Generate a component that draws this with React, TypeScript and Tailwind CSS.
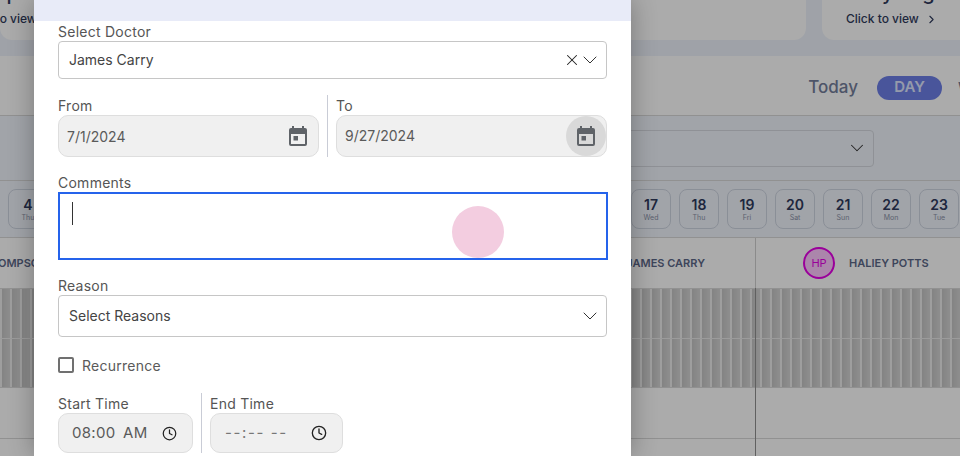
import { ChevronDown, ChevronRight, Clock, X } from "lucide-react";

const days = [
  { d: "17", w: "Wed" },
  { d: "18", w: "Thu" },
  { d: "19", w: "Fri" },
  { d: "20", w: "Sat" },
  { d: "21", w: "Sun" },
  { d: "22", w: "Mon" },
  { d: "23", w: "Tue" },
];

const DayChip = ({ d, w }: { d: string; w: string }) => (
  <div className="flex h-10 w-10 shrink-0 flex-col items-center justify-center rounded-lg border border-[#ced5e2]">
    <span className="text-[14px] leading-[17px] font-semibold text-[#2f3a5c]">{d}</span>
    <span className="text-[7px] leading-[9px] text-[#8a93a8]">{w}</span>
  </div>
);

const CalendarIcon = () => (
  <svg width="24" height="24" viewBox="0 0 24 24" fill="#5f6368">
    <path d="M19 4h-1V2h-2v2H8V2H6v2H5a2 2 0 0 0-2 2v14a2 2 0 0 0 2 2h14a2 2 0 0 0 2-2V6a2 2 0 0 0-2-2zm0 16H5V10h14v10z" />
    <rect x="7.5" y="12" width="4.5" height="4.5" />
  </svg>
);

const Background = () => (
  <div className="flex h-[456px] w-[960px] flex-col bg-white">
    <div className="flex h-[56px] shrink-0 justify-end gap-4 bg-[#edf2fb] pb-4">
      <div className="mr-auto flex w-[150px] flex-col justify-end overflow-hidden rounded-b-xl bg-white pb-[13px] text-[12px] leading-4 font-medium text-[#2f3a5c]">
        <span className="mb-[8px] -ml-[37px] whitespace-nowrap text-[20px] leading-[20px]">Setup</span>
        <span className="-ml-[36px] whitespace-nowrap">Click to view</span>
      </div>
      <div className="w-[300px] rounded-b-xl bg-white" />
      <div className="flex w-[138px] flex-col justify-end overflow-hidden rounded-bl-xl bg-white pb-[13px] pl-6 font-medium text-[#2f3a5c]">
        <span className="mb-[8px] whitespace-nowrap text-[20px] leading-[20px]">Daily Log</span>
        <span className="flex items-center gap-[6px] text-[12px] leading-4">
          Click to view <ChevronRight size={13} />
        </span>
      </div>
    </div>
    <div className="flex h-[60px] shrink-0 items-center justify-end overflow-hidden border-b border-[#d9d9d9] pt-1">
      <span className="mr-[19px] text-[17px] font-medium text-[#747e9c]">Today</span>
      <span className="mr-4 flex h-6 w-[65px] items-center justify-center rounded-full bg-[#6d7fe8] text-[15px] font-semibold text-[#dfe6ff]">DAY</span>
      <span className="w-[2px] overflow-hidden text-[16px] font-semibold text-[#747e9c]">W</span>
    </div>
    <div className="flex h-[65px] shrink-0 items-center justify-end border-b border-[#d9d9d9] bg-[#f1f5fc] pr-[86px]">
      <div className="flex h-[37px] w-[260px] items-center justify-end rounded border border-[#d5d9e0] pr-[5px] text-[#333]">
        <ChevronDown size={22} strokeWidth={1.1} />
      </div>
    </div>
    <div className="flex h-[57px] shrink-0 items-center justify-between border-b border-[#d9d9d9] bg-[#f1f5fc] pr-[1px] pl-2">
      <DayChip d="4" w="Thu" />
      <div className="flex gap-2">
        {days.map((day) => (
          <DayChip key={day.d} d={day.d} w={day.w} />
        ))}
      </div>
    </div>
    <div className="flex h-[50px] shrink-0">
      <div className="flex w-[756px] items-center justify-between border-r border-[#cfcfcf] pr-[50px] text-[11px] font-semibold text-[#5c6888]">
        <span className="-ml-[2px]">OMPSON</span>
        <span>JAMES CARRY</span>
      </div>
      <div className="flex flex-1 items-center gap-[14px] pl-[47px] text-[11px] font-semibold text-[#5c6888]">
        <span className="flex h-8 w-8 items-center justify-center rounded-full border-2 border-[#e600e6] bg-[#ffc8ff] text-[11px] font-normal text-[#e600e6]">HP</span>
        HALIEY POTTS
      </div>
    </div>
    <div className="relative flex-1">
      <div className="h-[51px] border-t border-b border-t-[#d9d9d9] border-b-[#e8e8e8] bg-[repeating-linear-gradient(90deg,#ececec_0,#ececec_2px,#c4c4c4_2px,#d4d4d4_10px)]" />
      <div className="h-[49px] border-b border-[#d9d9d9] bg-[repeating-linear-gradient(90deg,#ececec_0,#ececec_2px,#c4c4c4_2px,#d4d4d4_10px)]" />
      <div className="h-[51px] border-b border-[#d9d9d9]" />
      <div className="absolute top-0 bottom-0 left-[755px] w-px bg-[#8f8f8f]" />
    </div>
  </div>
);

const Field = ({ label, className, children }: { label: string; className?: string; children: React.ReactNode }) => (
  <div className={className}>
    <div className="h-5 text-[14px] leading-[21px] tracking-[0.25px] text-[#555]">{label}</div>
    {children}
  </div>
);

const grayBox = "flex items-center rounded-[10px] border border-[#dedede] bg-[#f0f0f0] text-[14px] text-[#5a5a5a]";

const Modal = () => (
  <div className="absolute top-0 bottom-0 left-[34px] w-[597px] bg-white shadow-[0_0_24px_rgba(0,0,0,0.3)]">
    <div className="h-[21px] bg-[#e8ebf8]" />
    <div className="px-6">
      <Field label="Select Doctor">
        <div className="flex h-[38px] items-center rounded border border-[#c6c6c6] pr-[4px] pl-[10px] text-[14px] text-[#444]">
          <span className="flex-1 pb-px">James Carry</span>
          <X size={18} strokeWidth={1.4} className="-mr-[3px] text-[#222]" />
          <ChevronDown size={24} strokeWidth={1} className="text-[#333]" />
        </div>
      </Field>
      <div className="mt-4 flex">
        <Field label="From" className="w-[261px]">
          <div className={`${grayBox} h-[42px] justify-between pr-[8px] pl-2`}>
            7/1/2024
            <CalendarIcon />
          </div>
        </Field>
        <div className="mx-2 w-px bg-[#c9ccd6]" />
        <Field label="To" className="w-[271px]">
          <div className={`${grayBox} relative h-[42px] justify-between pr-[8px] pl-2`}>
            <span className="pb-[2px]">9/27/2024</span>
            <span className="absolute top-0 right-0 flex h-10 w-10 items-center justify-center rounded-full bg-[#d9d9d9]">
              <CalendarIcon />
            </span>
          </div>
        </Field>
      </div>
      <Field label="Comments" className="mt-[15px]">
        <div className="-mr-px h-[68px] border-2 border-[#2563eb] pt-2 pl-3">
          <div className="h-[23px] w-px bg-[#333]" />
        </div>
      </Field>
      <Field label="Reason" className="mt-[15px]">
        <div className="flex h-[42px] items-center justify-between rounded border border-[#c6c6c6] pr-[4px] pl-[10px] text-[14px] text-[#444]">
          <span className="pb-px">Select Reasons</span>
          <ChevronDown size={24} strokeWidth={1} className="text-[#333]" />
        </div>
      </Field>
      <div className="mt-5 flex h-4 items-center gap-2 text-[14px] tracking-[0.25px] text-[#5a5a5a]">
        <span className="h-4 w-4 rounded-[2px] border-2 border-[#707070]" />
        Recurrence
      </div>
      <div className="mt-5 flex">
        <Field label="Start Time" className="w-[135px]">
          <div className={`${grayBox} h-10 justify-between pr-[15px] pl-[13px] text-[15px] tracking-[0.3px] [word-spacing:3px]`}>
            08:00 AM
            <Clock size={15} strokeWidth={2} className="text-[#222]" />
          </div>
        </Field>
        <div className="mx-2 w-px bg-[#c9ccd6]" />
        <Field label="End Time" className="w-[133px]">
          <div className={`${grayBox} h-10 justify-between pr-[15px] pl-[14px] text-[15px] tracking-[1.6px] text-[#777]`}>
            --:-- --
            <Clock size={16} strokeWidth={2} className="text-[#222]" />
          </div>
        </Field>
      </div>
    </div>
  </div>
);

export default function App() {
  return (
    <div className="relative h-[456px] w-[960px] overflow-hidden font-['Inter','Liberation_Sans',sans-serif]">
      <Background />
      <div className="absolute inset-0 bg-black/[0.33]" />
      <Modal />
      <div className="absolute top-[206px] left-[452px] h-[52px] w-[52px] rounded-full bg-[#f3cde0]" />
    </div>
  );
}
